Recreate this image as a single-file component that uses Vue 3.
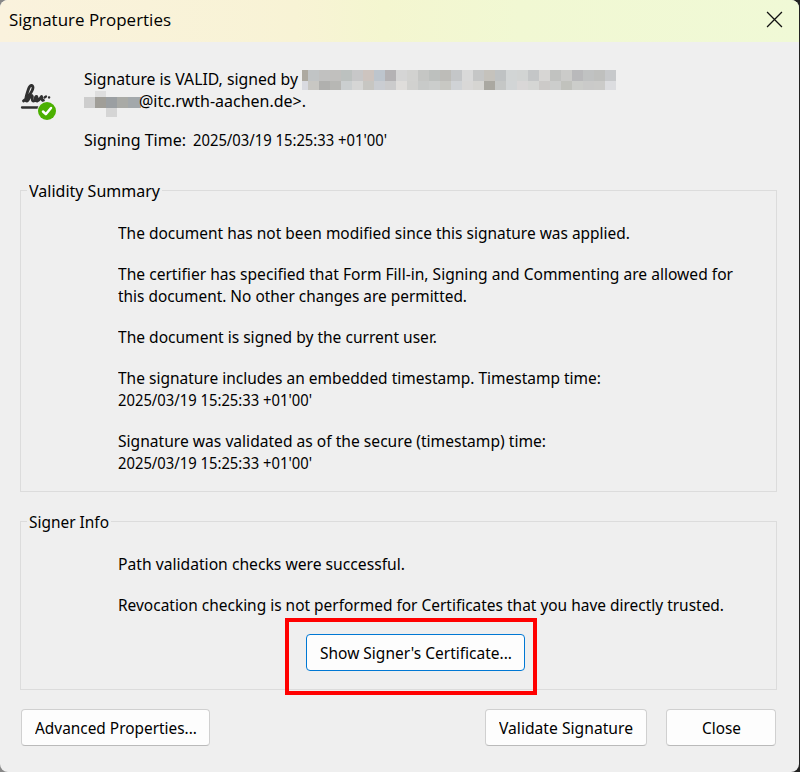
<script setup>
const vFit = {
  mounted(el, { value }) {
    const width = el.getBoundingClientRect().width
    el.style.transform = `scaleX(${value / width})`
    el.style.marginRight = `${value - width}px`
  },
}

const nameTop = ['#ada9a0', '#c1c4c5', '#c1c1c0', '#c1c0be', '#bcc1bf', '#c7c7c8', '#cdc4bf', '#bdc5cd', '#b4b2b4', '#d5d5d5', '#d2d2d0', '#c5c6c4', '#bdc0be', '#bdbcb8', '#c4c6c8', '#d9d9d9', '#c5c6c6', '#c5c2bc', '#bfc2c3', '#d2d5d5', '#d2d4d3', '#c4c6c7', '#d7d6d4', '#c1c2c0', '#cbcbc9', '#b9b9bb', '#c0c2c2', '#bfc0be', '#c7c9cb']
const nameBottom = ['#d9dae0', '#c8c7c3', '#b0b0ae', '#b7b7b4', '#cbcfd0', '#d6d6d5', '#c7c6c2', '#cacdd2', '#cbcbcc', '#dfdddb', '#d1d1cf', '#c8cac9', '#cbcdcc', '#c8c8c3', '#d0d3d6', '#d9d8d7', '#d6d5d2', '#aaa8a1', '#c5c7c6', '#d2d5d6', '#d9d7d7', '#d5d6d4', '#cccac8', '#cccdcc', '#c1c2bd', '#cccdca', '#cacac9', '#cbcbc9', '#dcdde0']
const redacted = [nameTop, nameBottom].flatMap((row, y) =>
  row.map((fill, i) => ({ fill, x: i ? 6 + (i - 1) * 11 : 0, y: y * 11, w: i ? 11 : 6, h: y ? 9 : 11 })),
)

const summary = [
  [['The document has not been modified since this signature was applied.', 512]],
  [['The certifier has specified that Form Fill-in, Signing and Commenting are allowed for', 615], ['this document. No other changes are permitted.', 349]],
  [['The document is signed by the current user.', 319]],
  [['The signature includes an embedded timestamp. Timestamp time:', 483], ["2025/03/19 15:25:33 +01'00'", 194]],
  [['Signature was validated as of the secure (timestamp) time:', 428], ["2025/03/19 15:25:33 +01'00'", 194]],
]
const signer = [
  [['Path validation checks were successful.', 287]],
  [['Revocation checking is not performed for Certificates that you have directly trusted.', 606]],
]
</script>

<template>
  <div class="desktop">
    <main class="dialog">
      <header class="titlebar">
        <span v-fit="162" class="title">Signature Properties</span>
        <svg class="x" viewBox="0 0 16 16"><path d="M1 1 15 15M15 1 1 15" /></svg>
      </header>

      <section class="intro">
        <svg class="sign" viewBox="0 0 38 40">
          <g class="ink">
            <path d="M3.5 21C8 18 13 10.500 13 7.500C13 4.500 10 4.500 8.500 9C6.500 15 4.500 21 6.800 21C9 21 9.500 15.500 11.500 15.500C13.500 15.500 11 21 13.500 21C16 21 18 18 16.800 16.500C15 15.500 14.500 21 17.500 21C19.500 21 20.500 17 21.500 16.500C22 18 21.500 21 23.500 20.500" />
            <path d="M24.500 17.500 26 16.500M29 17.500h.2" class="rule" />
            <path d="M2 27.500h16" class="rule" />
          </g>
          <circle class="halo" cx="27" cy="31" r="10" />
          <circle class="ok" cx="27" cy="31" r="9" />
          <path class="tick" d="M23 31.500 25.800 34.200 31 28" />
        </svg>
        <div class="lines">
          <div class="line">
            <span v-fit="214">Signature is VALID, signed by</span>
            <svg class="name" width="314" height="20" shape-rendering="crispEdges">
              <rect v-for="(c, i) in redacted" :key="i" :x="c.x" :y="c.y" :width="c.w" :height="c.h" :fill="c.fill" />
            </svg>
          </div>
          <div class="line">
            <svg class="mail" width="57" height="26" shape-rendering="crispEdges">
              <path fill="#cdcdcd" d="M0 6h11v11H0z" /><path fill="#dedede" d="M11 0h11v6H11z" />
              <path fill="#a09e98" d="M11 6h11v11H11z" /><path fill="#9b9fa2" d="M22 6h11v11H22z" />
              <path fill="#a9aaa6" d="M33 6h11v11H33z" /><path fill="#a3a8ab" d="M44 6h12v11H44z" />
              <path fill="#c9a17b" d="M56 6h1v11h-1z" /><path fill="#d5d5d5" d="M22 17h11v9H22z" />
            </svg>
            <span v-fit="167">@itc.rwth-aachen.de&gt;.</span>
          </div>
          <div class="line time"><span v-fit="102">Signing Time:</span><span v-fit="194">2025/03/19 15:25:33 +01'00'</span></div>
        </div>
      </section>

      <section class="group validity">
        <h2><span v-fit="131">Validity Summary</span></h2>
        <div class="body">
          <p v-for="(para, i) in summary" :key="i">
            <span v-for="[text, w] in para" :key="text" class="line"><span v-fit="w">{{ text }}</span></span>
          </p>
        </div>
      </section>

      <section class="group signer">
        <h2><span v-fit="80">Signer Info</span></h2>
        <div class="body">
          <p v-for="(para, i) in signer" :key="i">
            <span v-for="[text, w] in para" :key="text" class="line"><span v-fit="w">{{ text }}</span></span>
          </p>
        </div>
        <div class="highlight">
          <button class="btn show"><span v-fit="192">Show Signer's Certificate...</span></button>
        </div>
      </section>

      <footer class="actions">
        <button class="btn advanced"><span v-fit="162">Advanced Properties...</span></button>
        <button class="btn validate"><span v-fit="134">Validate Signature</span></button>
        <button class="btn close"><span v-fit="39">Close</span></button>
      </footer>
    </main>
  </div>
</template>

<style>
body { margin: 0; overflow: hidden; }
</style>
<style scoped>
* { box-sizing: border-box; }
.desktop { width: 800px; height: 772px; background: linear-gradient(90deg, #888 50%, #222 50%); overflow: hidden; }
.dialog { width: 799px; height: 772px; background: #efefef; border-radius: 8px; overflow: hidden; display: flex; flex-direction: column; color: #000; font: 17px/22px "Noto Sans", "Open Sans", sans-serif; }
span { white-space: pre; flex: none; transform-origin: 0 50%; }
.titlebar { height: 42px; flex: none; display: flex; align-items: flex-start; justify-content: space-between; padding: 9px 16px 0 9px; background: linear-gradient(90deg, #faf2dd, #f8f3d5 37%, #f4f6d0 48%, #f1f8d3 65%, #f0f9d6); }
.title { font-family: "Open Sans", sans-serif; font-size: 17px; }
.x { width: 17px; height: 17px; margin-top: 2px; fill: none; stroke: #111; stroke-width: 1.2; }
.intro { height: 148px; flex: none; display: flex; padding: 26px 0 0 20px; }
.sign { width: 38px; height: 40px; margin-top: 12px; flex: none; }
.ink { fill: none; stroke: #303030; stroke-width: 2.8; stroke-linecap: round; stroke-linejoin: round; }
.rule { stroke-width: 2.3; }
.halo { fill: #efefef; }
.ok { fill: #4bb000; }
.tick { fill: none; stroke: #fff; stroke-width: 2.5; stroke-linecap: round; stroke-linejoin: round; }
.lines { padding-left: 26px; }
.line { display: flex; height: 22px; }
.name { margin: 2px 0 0 4px; flex: none; }
.mail { margin: 1px -2px 0 0; flex: none; }
.time { margin-top: 17px; gap: 7px; }
.group { width: 757px; margin-left: 20px; border: 1px solid #dcdcdc; flex: none; }
.validity { height: 302px; }
.signer { height: 169px; margin-top: 29px; }
h2 { font: inherit; margin: -11px 0 0 6px; padding: 0 2px; width: fit-content; height: 22px; background: #efefef; display: flex; }
.body { padding: 20px 0 0 97px; }
p { margin: 0 0 19px; }
.highlight { width: 252px; height: 77px; margin: -17px 0 0 264px; border: 4px solid #f00; display: flex; align-items: flex-start; padding: 12px 0 0 17px; position: relative; }
.btn { height: 37px; padding: 0; background: #fdfdfd; border: 1px solid #d0d0d0; border-bottom-color: #bababa; border-radius: 4px; font: inherit; color: #000; display: flex; align-items: center; justify-content: center; }
.show { width: 219px; border-color: #0078d4; }
.actions { display: flex; padding: 19px 0 0 21px; }
.advanced { width: 189px; }
.validate { width: 162px; margin-left: 275px; }
.close { width: 110px; margin-left: 19px; }
</style>
